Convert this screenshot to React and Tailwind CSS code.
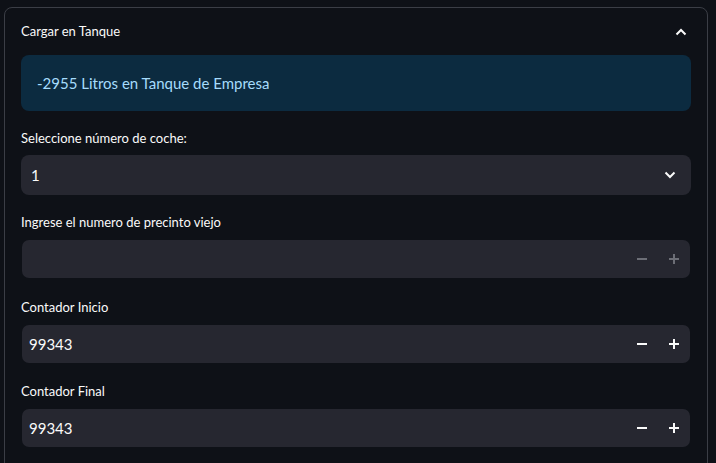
import React from 'react';

const font = { fontFamily: 'Lato, "Noto Sans", sans-serif' };

// Flechas y botones de paso
const ChevronUp = () => (
  <svg width="12" height="8" viewBox="0 0 12 8" fill="none">
    <path d="M1.5 6.5L6 2l4.5 4.5" stroke="#fafafa" strokeWidth="2" />
  </svg>
);

const ChevronDown = () => (
  <svg width="12" height="8" viewBox="0 0 12 8" fill="none">
    <path d="M1.5 1.5L6 6l4.5-4.5" stroke="#fafafa" strokeWidth="2" />
  </svg>
);

const Minus = ({ color }) => (
  <svg width="10" height="10" viewBox="0 0 10 10">
    <rect x="0" y="4" width="10" height="2" fill={color} />
  </svg>
);

const Plus = ({ color }) => (
  <svg width="10" height="10" viewBox="0 0 10 10">
    <rect x="0" y="4" width="10" height="2" fill={color} />
    <rect x="4" y="0" width="2" height="10" fill={color} />
  </svg>
);

const Label = ({ children }) => (
  <div className="h-[24px] flex items-center text-[13px] text-[#fafafa] mb-[4px]">{children}</div>
);

const NumberInput = ({ label, value, disabled, className }) => {
  const c = disabled ? '#6c6e76' : '#fafafa';
  return (
    <div className={className}>
      <Label>{label}</Label>
      <div className="h-[40px] flex items-center rounded-lg bg-[#262730] bg-clip-padding border border-transparent">
        <div className="flex-1 pl-[7px] text-[15px] text-[#fafafa]">{value}</div>
        <button className="w-[32px] h-full flex items-center justify-center">
          <Minus color={c} />
        </button>
        <button className="w-[32px] h-full flex items-center justify-center">
          <Plus color={c} />
        </button>
      </div>
    </div>
  );
};

const App = () => {
  return (
    <div className="w-full h-screen bg-[#0e1117] pl-[4px] pt-[7px] overflow-hidden" style={font}>
      <div className="w-[704px] h-[500px] border border-[#3b3e46] rounded-lg">
        {/* Encabezado */}
        <div className="h-[47px] flex items-center justify-between px-4">
          <span className="text-[13px] text-[#fafafa]">Cargar en Tanque</span>
          <span className="pr-[4px]"><ChevronUp /></span>
        </div>

        <div className="px-4">
          {/* Aviso */}
          <div className="h-[56px] flex items-center px-4 rounded-lg bg-[#0c2b40] text-[15px] text-[#a6dcfc]">
            -2955 Litros en Tanque de Empresa
          </div>

          {/* Selector */}
          <div className="mt-4">
            <Label>Seleccione número de coche:</Label>
            <div className="h-[40px] flex items-center justify-between rounded-lg bg-[#262730] pl-[10px] pr-[15px]">
              <span className="text-[15px] text-[#fafafa]">1</span>
              <ChevronDown />
            </div>
          </div>

          <NumberInput className="mt-4" label="Ingrese el numero de precinto viejo" value="" disabled />
          <NumberInput className="mt-[17px]" label="Contador Inicio" value="99343" />
          <NumberInput className="mt-4" label="Contador Final" value="99343" />
        </div>
      </div>
    </div>
  );
};

export default App;
